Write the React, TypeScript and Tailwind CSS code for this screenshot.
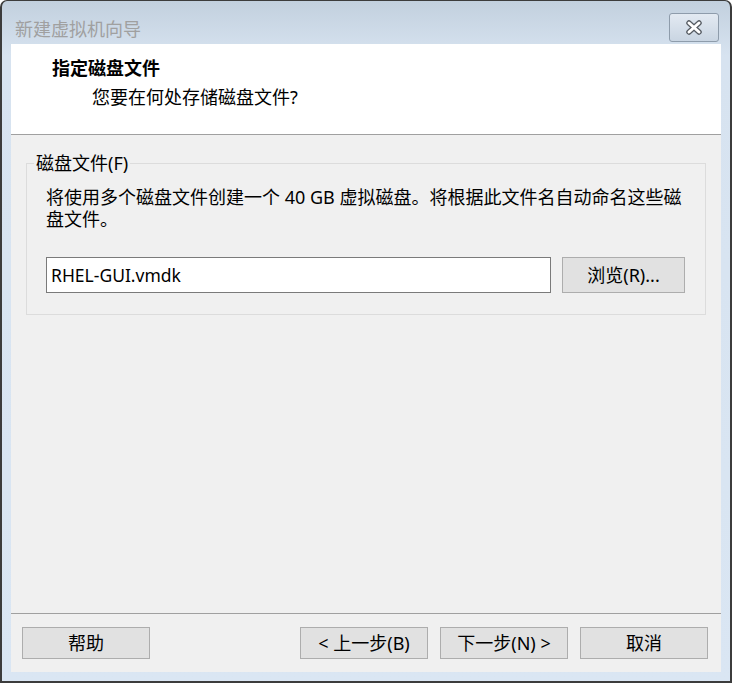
import React from "react";

const ui = "font-['Noto_Sans','Noto_Sans_CJK_SC',sans-serif]";

function WinButton({ children, className = "" }: { children: React.ReactNode; className?: string }) {
  return (
    <button
      className={`h-[32px] w-[128px] border border-[#adadad] bg-[#e1e1e1] text-[18px] leading-none text-black ${className}`}
    >
      {children}
    </button>
  );
}

export default function App() {
  return (
    <div className={`h-[683px] w-[732px] ${ui}`}>
      <div className="flex h-full w-full flex-col rounded-t-[7px] border-x-2 border-b-2 border-t border-[#3c3c3c] bg-linear-to-b from-[#c2d0de] via-[#d7e3f0] via-8% to-[#dae6f3] px-[9px] pb-[9px]">
        {/* title bar */}
        <div className="-mx-[9px] flex h-[43px] shrink-0 items-start justify-between pl-[13px] pr-[11px]">
          <div className="mt-[16px] text-[18px] leading-[24px] text-[#a0a0a0]">新建虚拟机向导</div>
          <div className="mt-[12px] flex h-[29px] w-[50px] items-center justify-center rounded-[3px] border border-[#8e9cab] bg-linear-to-b from-[#e3eaf2] to-[#c9d5e2]">
            <svg width="18" height="15" viewBox="0 0 18 15">
              <path d="M4 3 L14 12 M14 3 L4 12" stroke="#555b62" strokeWidth="5.5" strokeLinecap="round" />
              <path d="M4 3 L14 12 M14 3 L4 12" stroke="#ffffff" strokeWidth="3" strokeLinecap="round" />
            </svg>
          </div>
        </div>

        {/* client area */}
        <div className="flex flex-1 flex-col bg-[#f0f0f0]">
          <div className="h-[91px] shrink-0 border-b border-[#a0a0a0] bg-white pt-[12px]">
            <div className="pl-[41px] text-[18px] font-bold leading-[24px] text-black">指定磁盘文件</div>
            <div className="mt-[5px] pl-[81px] text-[18px] leading-[24px] text-black">您要在何处存储磁盘文件?</div>
          </div>

          <div className="flex-1 px-[15px] pt-[28px]">
            <div className="h-[152px] border border-[#dcdcdc] px-[19px]">
              <div className="-ml-[12px] -mt-[12px] w-fit bg-[#f0f0f0] px-[2px] text-[18px] leading-[22px] text-black">
                磁盘文件(F)
              </div>
              <div className="mt-[12px] whitespace-nowrap text-[18px] leading-[22px] text-black">
                将使用多个磁盘文件创建一个 40 GB 虚拟磁盘。将根据此文件名自动命名这些磁
                <br />
                盘文件。
              </div>
              <div className="mt-[27px] flex items-center gap-[11px]">
                <div className="flex h-[36px] w-[505px] items-center border border-[#7a7a7a] bg-white pl-[4px] text-[17.5px] text-black">
                  RHEL-GUI.vmdk
                </div>
                <button className="h-[36px] w-[123px] border border-[#adadad] bg-[#e1e1e1] text-[18px] text-black">
                  浏览(R)...
                </button>
              </div>
            </div>
          </div>

          <div className="flex h-[59px] shrink-0 items-center border-t border-[#a0a0a0] pl-[11px] pr-[13px]">
            <WinButton>帮助</WinButton>
            <div className="ml-auto flex gap-[12px]">
              <WinButton>&lt; 上一步(B)</WinButton>
              <WinButton>下一步(N) &gt;</WinButton>
              <WinButton>取消</WinButton>
            </div>
          </div>
        </div>
      </div>
    </div>
  );
}
